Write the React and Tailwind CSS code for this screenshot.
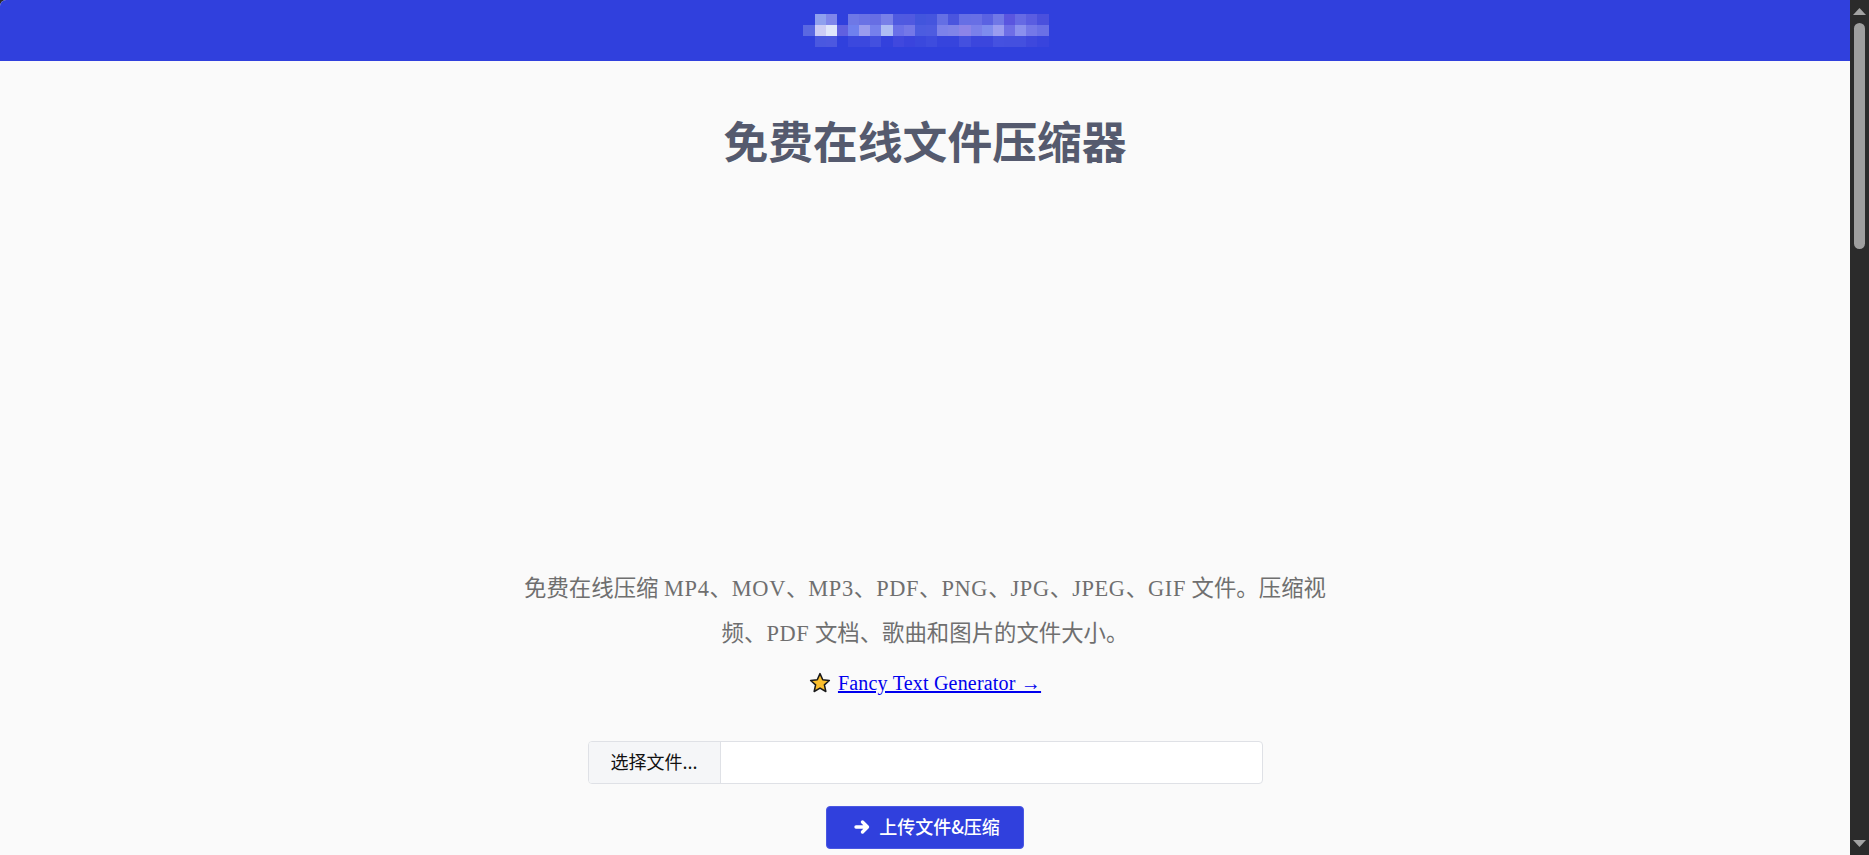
/* ─── BLURRED LOGO (pixel mosaic) ───────────────────── */
const BG = "#3040dd";
const LOGO_ROWS = [
  [BG, "#8fa0ee", "#7f86ea", BG, "#6e78e6", "#6a72e5", "#676ee4", "#7880e8", "#4f5ae0", "#5059e0", "#4255dd", "#4555de", "#646fe4", "#4a55de", "#666fe5", "#686fe5", "#5a62e2", "#7078e6", "#5a55df", "#666ae4", "#5a5de1", "#4a50dd"],
  ["#5a68e2", "#ccccf5", "#e0e6fb", "#6060e0", "#6f80ee", "#9a9cee", "#7580ec", "#aebdf4", "#6a70e8", "#7478e8", "#4c5ce0", "#4e5ce0", "#7c82ea", "#8084e8", "#8c84e8", "#7a80ea", "#7e8cee", "#9a9cf0", "#6e6ee6", "#8a90ee", "#7478e8", "#6a70e6"],
  [BG, "#4a58e0", "#4c58e0", BG, "#3b48de", "#3b48de", "#4350df", "#3341dd", "#4048de", "#3a44dd", "#3a48dd", "#3e4cde", "#3644dd", "#3644dd", "#4450df", "#3b46dd", "#3b46dd", "#4551e0", "#4450df", "#4450df", "#3e48dd", "#3844dd"],
];

function BlurredLogo() {
  return (
    <div className="flex flex-col ml-[2px]">
      {LOGO_ROWS.map((row, r) => (
        <div key={r} className="flex">
          {row.map((color, c) => (
            <div key={c} className="w-[11.15px] h-[11.3px]" style={{ background: color }} />
          ))}
        </div>
      ))}
    </div>
  );
}

/* ─── SCROLLBAR ─────────────────────────────────────── */
function Scrollbar() {
  return (
    <div className="w-[19px] shrink-0 h-full bg-[#2b2b2b] flex flex-col items-center">
      <svg width="13" height="7" viewBox="0 0 13 7" className="mt-[8px]">
        <path d="M6.5 0L13 7H0z" fill="#a3a3a3" />
      </svg>
      <div className="w-[11px] h-[226px] mt-[8px] rounded-full bg-[#9f9f9f]" />
      <svg width="13" height="7" viewBox="0 0 13 7" className="mt-auto mb-[8px]">
        <path d="M0 0H13L6.5 7z" fill="#a3a3a3" />
      </svg>
    </div>
  );
}

// latin runs sit a little wider than the serif fallback
function L({ children }) {
  return <span className="tracking-[0.62px]">{children}</span>;
}

export default function App() {
  return (
    <div className="w-full h-screen flex overflow-hidden bg-[#2b2b2b]">
      <div className="flex-1 h-full overflow-hidden bg-[#fafafa] rounded-tl-[6px] font-['Noto_Sans_CJK_SC','Noto_Sans',sans-serif]">
        <header className="h-[61px] bg-[#3040dd] flex items-center justify-center">
          <BlurredLogo />
        </header>

        <h1 className="mt-[49px] text-center text-[44.8px] leading-[60px] font-bold text-[#555a6e]">
          免费在线文件压缩器
        </h1>

        {/* ad slot */}
        <div className="h-[396px]" />

        <p className="w-[830px] mx-auto text-center text-[22.4px] leading-[45px] text-[#6f6f6f] font-['Liberation_Serif','Noto_Sans_CJK_SC',serif]">
          免费在线压缩 <L>MP4</L>、<L>MOV</L>、<L>MP3</L>、<L>PDF</L>、<L>PNG</L>、<L>JPG</L>、<L>JPEG</L>、<L>GIF</L> 文件。压缩视频、<L>PDF</L> 文档、歌曲和图片的文件大小。
        </p>

        <div className="mt-[14px] flex items-center justify-center gap-[7px] h-[26px]">
          <svg width="22" height="22" viewBox="0 0 20 20">
            <path
              d="M10 1.5l2.5 5.6 6 .6-4.5 4 1.3 6-5.3-3.1-5.3 3.1 1.3-6-4.5-4 6-.6z"
              fill="#fbbf2d"
              stroke="#1a1a1a"
              strokeWidth="1.4"
              strokeLinejoin="round"
            />
          </svg>
          <a href="#" className="text-[20px] tracking-[0.2px] leading-[26px] text-[#0000ee] underline font-['Liberation_Serif',serif]">
            Fancy Text Generator →
          </a>
        </div>

        <div className="mt-[45px] mx-auto w-[675px] h-[43px] flex rounded-[4px] border border-[#dfe1e6] bg-white overflow-hidden">
          <div className="w-[132px] shrink-0 pb-[3px] bg-[#f5f6f8] border-r border-[#dfe1e6] flex items-center justify-center text-[18px] text-[#111111]">
            选择文件...
          </div>
        </div>

        <div className="mt-[22px] flex justify-center">
          <button className="w-[198px] h-[43px] pl-[4px] pb-[2px] rounded-[4px] bg-[#3040dd] border border-[#4a57e2] text-white text-[18px] font-medium flex items-center justify-center gap-[9px]">
            <svg width="16" height="16" viewBox="0 0 16 16" fill="none" stroke="currentColor" strokeWidth="3.4" strokeLinejoin="round" strokeLinecap="round">
              <path d="M2 8h11M8.5 3l5 5-5 5" />
            </svg>
            上传文件&amp;压缩
          </button>
        </div>
      </div>
      <Scrollbar />
    </div>
  );
}
